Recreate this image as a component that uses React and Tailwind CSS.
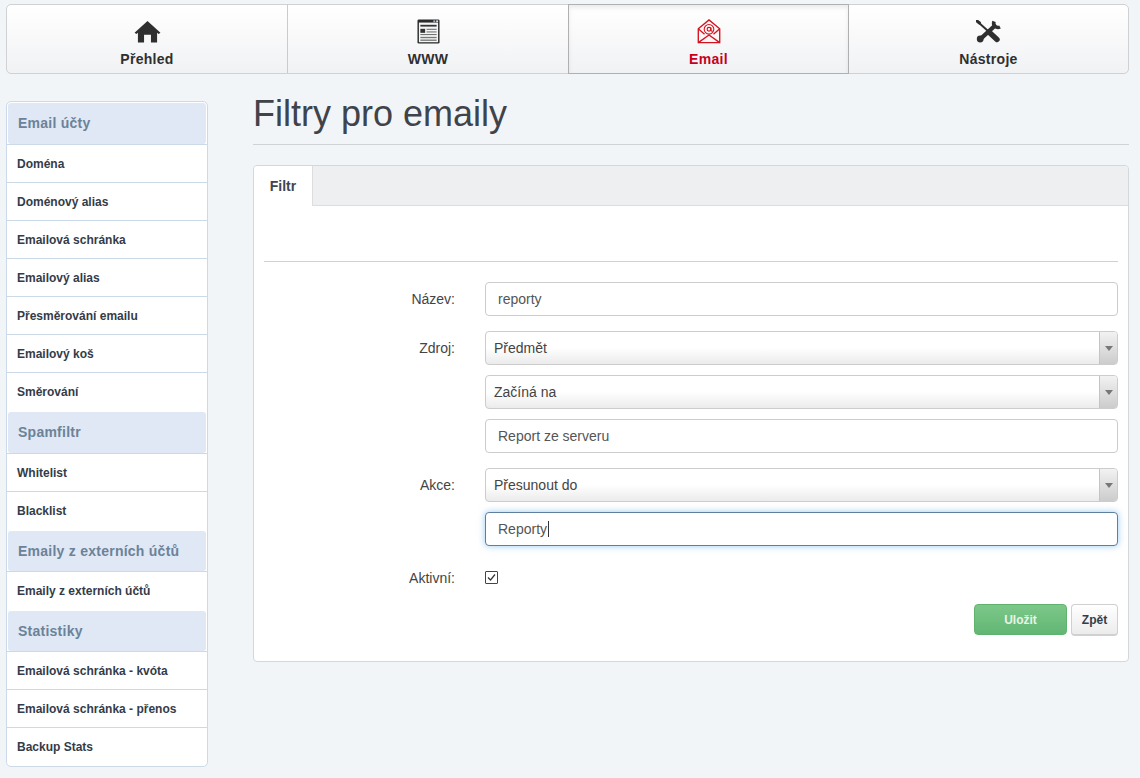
import React from "react";

const HomeIcon = () => (
  <svg width="27" height="23" viewBox="0 0 28 24">
    <path d="M14 1 L27.5 13.2 L25.6 14.6 L24 13.4 V23.5 H17.6 V15.5 H10.4 V23.5 H4 V13.4 L2.4 14.6 L0.5 13.2 Z" fill="#2f2f2f" />
  </svg>
);

const NewsIcon = () => (
  <svg width="23" height="25" viewBox="0 0 24 28" preserveAspectRatio="none">
    <rect x="0.5" y="0.5" width="23" height="27" rx="1.5" fill="#2b2b2b" />
    <rect x="2" y="4" width="20" height="22" fill="#f4f5f6" />
    <rect x="17" y="1.5" width="2" height="2" fill="#9fb4cc" />
    <rect x="20" y="1.5" width="2" height="2" fill="#ddd" />
    <rect x="3.5" y="6.5" width="17" height="2" fill="#333" />
    <rect x="3.5" y="11" width="5" height="4.5" fill="#333" />
    <rect x="10" y="11" width="10.5" height="1" fill="#555" />
    <rect x="10" y="14" width="10.5" height="1" fill="#555" />
    <rect x="3.5" y="17" width="17" height="1" fill="#555" />
    <rect x="3.5" y="20" width="17" height="1.5" fill="#777" />
    <rect x="3.5" y="23" width="17" height="1.5" fill="#777" />
  </svg>
);

const MailIcon = () => (
  <svg width="24" height="25" viewBox="0 0 26 28" fill="none" stroke="#d3121f">
    <path d="M1 11 L13 1 L25 11 V26.5 H1 Z" strokeWidth="1.5" fill="#fdf6f6" />
    <path d="M1 11 L8 17 M25 11 L18 17 M1 26.5 L13 18 L25 26.5" strokeWidth="1.5" />
    <circle cx="13" cy="11.5" r="5.4" strokeWidth="1.2" fill="#fdf6f6" />
    <circle cx="13" cy="11.5" r="2.1" strokeWidth="1.3" />
    <path d="M15.2 9.5 V12.5 Q15.5 14 17.2 13.4" strokeWidth="1.2" />
  </svg>
);

const ToolsIcon = () => (
  <svg width="25" height="23" viewBox="0 0 25 23" fill="none" stroke="#2f2f2f" strokeLinecap="round">
    <path d="M2 2 L12 11" strokeWidth="2" />
    <path d="M1 1 L3.5 3" strokeWidth="3" />
    <path d="M14 13 L21 19.5" strokeWidth="5.4" />
    <path d="M18 6.5 L5 18.5" strokeWidth="4.4" />
    <circle cx="4.2" cy="19" r="3.4" fill="#2f2f2f" stroke="none" />
    <path d="M18 1.4 A4.4 4.4 0 0 0 24 7" strokeWidth="3.6" strokeLinecap="butt" />
  </svg>
);

const navItems = [
  { label: "Přehled", icon: <HomeIcon />, w: "w-[281px]" },
  { label: "WWW", icon: <NewsIcon />, w: "w-[281px]" },
  { label: "Email", icon: <MailIcon />, w: "w-[281px]", active: true },
  { label: "Nástroje", icon: <ToolsIcon />, w: "flex-1" },
];

const sideGroups = [
  { title: "Email účty", head: "h-[41px]", items: ["Doména", "Doménový alias", "Emailová schránka", "Emailový alias", "Přesměrování emailu", "Emailový koš", "Směrování"] },
  { title: "Spamfiltr", head: "mt-[2px] h-[41px]", items: ["Whitelist", "Blacklist"] },
  { title: "Emaily z externích účtů", head: "mt-[2px] h-[40px]", items: ["Emaily z externích účtů"] },
  { title: "Statistiky", head: "mt-[2px] h-[40px]", items: ["Emailová schránka - kvóta", "Emailová schránka - přenos", "Backup Stats"] },
];

const inputCls = "flex w-full h-[34px] items-center rounded-[4px] border bg-white px-3 text-[14px] text-[#555555]";

const Select = ({ value }) => (
  <div className="flex h-[34px] w-full rounded-[4px] border border-[#cccccc] bg-gradient-to-b from-white from-50% to-[#ebebeb] text-[14px] text-[#444444]">
    <div className="flex flex-1 items-center pl-2">{value}</div>
    <div className="flex w-[18px] items-center justify-center rounded-r-[3px] border-l border-[#c4c4c4] bg-gradient-to-b from-[#f2f2f2] to-[#cccccc]">
      <div className="h-0 w-0 border-x-[4px] border-t-[5px] border-x-transparent border-t-[#777777]" />
    </div>
  </div>
);

const Row = ({ label, children, className = "" }) => (
  <div className={`flex ${className}`}>
    <div className="flex h-[34px] w-[191px] shrink-0 items-center justify-end text-[14px] text-[#444444]">{label}</div>
    <div className="ml-[30px] flex-1">{children}</div>
  </div>
);

export default function App() {
  return (
    <div className="min-h-[778px] w-[1140px] overflow-hidden bg-[#f2f5f8] pl-[6px] pr-[11px] pt-[4px] font-['Liberation_Sans',Arial,sans-serif] text-[#333333]">
      <nav className="flex h-[70px] rounded-[5px] border border-[#cfd1d3] bg-gradient-to-b from-white to-[#f1f2f4]">
        {navItems.map((item, i) => (
          <div
            key={item.label}
            className={`flex flex-col items-center ${item.w} ${i < 2 ? "border-r border-[#c9cbcd]" : ""} ${item.active ? "-my-px -ml-px border border-[#b0b0b0] shadow-[inset_0_3px_4px_rgba(0,0,0,0.08)]" : ""}`}
          >
            <div className="mt-[12px] flex h-[28px] items-center">{item.icon}</div>
            <div className={`mt-[6px] text-[14px] font-bold leading-[16px] tracking-[0.3px] ${item.active ? "text-[#c8001e]" : "text-[#2f2f2f]"}`}>{item.label}</div>
          </div>
        ))}
      </nav>

      <div className="mt-[27px] flex items-start">
        <aside className="w-[202px] shrink-0 rounded-[5px] border border-[#ccd9e8] bg-white pt-px pb-[1px]">
          {sideGroups.map((group) => (
            <div key={group.title}>
              <div className={`mx-px flex items-center rounded-[3px] bg-[#dfe8f4] pl-[10px] text-[14px] font-bold tracking-[0.25px] text-[#6c8299] ${group.head}`}>
                {group.title}
              </div>
              <ul>
                {group.items.map((name) => (
                  <li key={name} className="flex h-[38px] items-center border-t border-[#ccd9e8] pl-[10px] text-[12px] font-bold text-[#333c48]">
                    {name}
                  </li>
                ))}
              </ul>
            </div>
          ))}
        </aside>

        <main className="ml-[45px] flex-1">
          <h1 className="-mt-[7px] h-[50px] text-[36px] font-normal leading-[40px] text-[#3f434a]">Filtry pro emaily</h1>
          <div className="border-t border-[#cfd3d7]" />

          <section className="mt-[20px] h-[497px] rounded-[4px] border border-[#d5d8db] bg-white">
            <div className="flex h-[40px] rounded-t-[4px] border-b border-[#dddddd] bg-[#eeeff1]">
              <div className="-mb-px flex w-[59px] items-center justify-center rounded-tl-[4px] border-r border-[#dddddd] bg-white text-[14px] font-bold text-[#3f4650]">Filtr</div>
            </div>

            <div className="px-[10px]">
              <div className="mt-[55px] border-t border-[#cfd1d3]" />
              <div className="mt-[20px]">
                <Row label="Název:">
                  <div className={`${inputCls} border-[#cccccc]`}>reporty</div>
                </Row>
                <Row label="Zdroj:" className="mt-[15px]">
                  <div className="flex flex-col gap-[10px]">
                    <Select value="Předmět" />
                    <Select value="Začíná na" />
                    <div className={`${inputCls} border-[#cccccc]`}>Report ze serveru</div>
                  </div>
                </Row>
                <Row label="Akce:" className="mt-[15px]">
                  <div className="flex flex-col gap-[10px]">
                    <Select value="Přesunout do" />
                    <div className={`${inputCls} border-[#5f7f9f] shadow-[0_0_7px_rgba(102,175,233,0.65)]`}>
                      Reporty<span className="ml-px h-[16px] w-px bg-[#333333]" />
                    </div>
                  </div>
                </Row>
                <Row label="Aktivní:" className="mt-[15px]">
                  <div className="flex h-[33px] items-center">
                    <div className="flex h-[13px] w-[13px] items-center justify-center rounded-[1px] border border-[#444444] bg-white">
                      <svg width="11" height="11" viewBox="0 0 11 11" fill="none" stroke="#333333" strokeWidth="1.2">
                        <path d="M2 5.5 L4.5 8 L9 2.5" />
                      </svg>
                    </div>
                  </div>
                </Row>
              </div>
              <div className="mt-[9px] flex justify-end gap-[4px]">
                <button className="h-[31px] w-[93px] rounded-[4px] border border-[#62b26f] bg-gradient-to-b from-[#7cc88a] to-[#62b673] text-[12px] font-bold text-[#e6f5e9]">Uložit</button>
                <button className="h-[32px] w-[47px] rounded-[4px] border border-b-2 border-[#d0d0d0] bg-gradient-to-b from-white to-[#ececec] text-[12px] font-bold text-[#333c48]">Zpět</button>
              </div>
            </div>
          </section>
        </main>
      </div>
    </div>
  );
}
